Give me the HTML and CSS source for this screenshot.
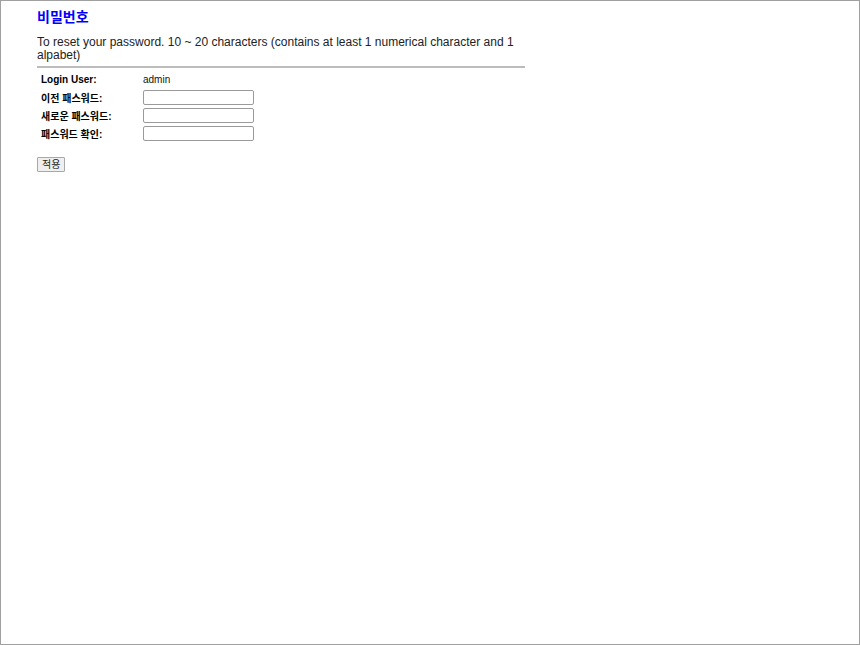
FILE: index.html
```html
<!DOCTYPE html>
<html lang="ko">
<head>
  <meta charset="UTF-8">
  <title>비밀번호</title>
  <link rel="stylesheet" href="styles.css">
</head>
<body>
  <div class="page">
    <!-- Title -->
    <h1 class="title">비밀번호</h1>

    <p class="desc">To reset your password. 10 ~ 20 characters (contains at least 1 numerical character and 1 alpabet)</p>
    <div class="rule"></div>

    <form class="pw-form">
      <table class="pw-table">
        <tr>
          <td class="label">Login User:</td>
          <td class="value">admin</td>
        </tr>
        <tr>
          <td class="label">이전 패스워드:</td>
          <td class="value"><input class="field" type="password"></td>
        </tr>
        <tr>
          <td class="label">새로운 패스워드:</td>
          <td class="value"><input class="field" type="password"></td>
        </tr>
        <tr>
          <td class="label">패스워드 확인:</td>
          <td class="value"><input class="field" type="password"></td>
        </tr>
      </table>

      <button type="button" class="apply-button">적용</button>
    </form>
  </div>
</body>
</html>
```

FILE: styles.css
```css
html, body {
  margin: 0;
  padding: 0;
  height: 100%;
}

body {
  box-sizing: border-box;
  border: 1px solid #a0a0a0;
  background-color: #ffffff;
  font-family: "Liberation Sans", Arial, "Noto Sans CJK KR", sans-serif;
  color: #000;
}

  .page {
    width: 488px;
    padding: 6px 0 0 36px;
  }

  .title {
    margin: 0;
    font-size: 14px;
    font-weight: bold;
    color: #0000ff;
    line-height: 20px;
  }

  .desc {
    margin: 9px 0 0 0;
    font-size: 12px;
    line-height: 13px;
    color: #222;
  }

  .rule {
    height: 2px;
    margin-top: 4px;
    background-color: #bcbcbc;
  }

  .pw-form {
    margin-top: 2px;
  }

  .pw-table {
    border-collapse: collapse;
  }

  .pw-table td {
    padding: 1px 0;
    height: 16px;
    font-size: 10px;
  }

  .label {
    width: 102px;
    padding-left: 4px !important;
    font-weight: bold;
  }

  .value {
    color: #111;
  }

  .field {
    display: block;
    box-sizing: border-box;
    width: 111px;
    height: 15px;
    margin: 0;
    padding: 0 2px;
    border: 1px solid #9a9a9a;
    border-radius: 2px;
    background: #fff;
    font-size: 11px;
  }

  .apply-button {
    display: block;
    margin-top: 15px;
    height: 15px;
    padding: 0 4px;
    font-size: 10px;
    line-height: 12px;
    font-family: "Liberation Sans", "Noto Sans CJK KR", sans-serif;
    background-color: #efefef;
    border: 1px solid #a8a8a8;
    border-radius: 1px;
    color: #222;
  }
```
